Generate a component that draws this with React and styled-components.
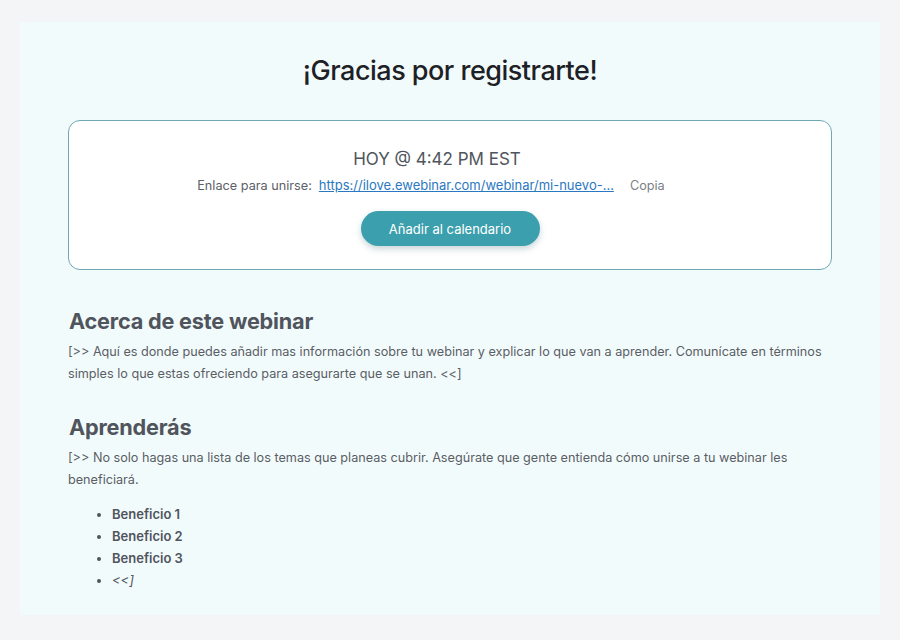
import React from 'react'
import styled, { createGlobalStyle } from 'styled-components';

const Global = createGlobalStyle`
    html, body {
        margin: 0;
        padding: 0;
        background: #f4f5f7;
        font-family: "Inter", "Noto Sans", sans-serif;
    }
`;

const Page = styled.div`
    padding: 22px 20px 25px 20px;
`;

const Panel = styled.div`
    background: #f2fbfb;
    min-height: 593px;
    box-sizing: border-box;
    padding: 32px 48px 20px 48px;
`;

const Title = styled.h1`
    margin: 0 0 33px 0;
    text-align: center;
    font-size: 27px;
    font-weight: 500;
    color: #1d2126;
    letter-spacing: -0.5px;
`;

const Card = styled.div`
    background: #ffffff;
    border: 1px solid #6ea8b4;
    border-radius: 12px;
    padding: 28px 20px 23px 20px;
    display: flex;
    flex-direction: column;
    align-items: center;
`;

const When = styled.div`
    padding-right: 26px;
    font-size: 17px;
    color: #50555d;
`;

const LinkRow = styled.div`
    margin-top: 8px;
    padding-right: 38px;
    display: flex;
    align-items: baseline;
    font-size: 12.7px;
    color: #5c6068;
`;

const JoinLink = styled.a`
    margin-left: 7px;
    color: #2a78c2;
    text-decoration: underline;
    white-space: nowrap;
    font-size: 13px;
`;

const Copy = styled.span`
    margin-left: 16px;
    color: #7b7f86;
`;

const CalendarButton = styled.button`
    margin-top: 18px;
    height: 35px;
    width: 179px;
    border: none;
    border-radius: 18px;
    background: #3c9fad;
    color: #ffffff;
    font-family: inherit;
    font-size: 13px;
    box-shadow: 0 3px 6px rgba(40, 90, 100, 0.25);
`;

const Section = styled.section`
    margin-top: ${props => props.top}px;
`;

const Heading = styled.h2`
    margin: 0 0 7px 1px;
    font-size: 21.7px;
    font-weight: 700;
    color: #50545d;
    letter-spacing: -0.2px;
`;

const Text = styled.p`
    margin: 0;
    font-size: 12.65px;
    line-height: 22px;
    color: #5a5e66;
`;

const List = styled.ul`
    margin: 12px 0 0 0;
    padding-left: 44px;
    font-size: 13px;
    line-height: 22px;
    color: #50545d;
`;

const Item = styled.li`
    font-weight: ${props => props.plain ? 400 : 600};
    font-style: ${props => props.plain ? 'italic' : 'normal'};
`;

export default function App() {
    return (
        <Page>
            <Global />
            <Panel>
                <Title>¡Gracias por registrarte!</Title>
                <Card>
                    <When>HOY @ 4:42 PM EST</When>
                    <LinkRow>
                        Enlace para unirse:
                        <JoinLink href="#">https://ilove.ewebinar.com/webinar/mi-nuevo-…</JoinLink>
                        <Copy>Copia</Copy>
                    </LinkRow>
                    <CalendarButton>Añadir al calendario</CalendarButton>
                </Card>
                <Section top={38}>
                    <Heading>Acerca de este webinar</Heading>
                    <Text>
                        [&gt;&gt; Aquí es donde puedes añadir mas información sobre tu webinar y explicar lo que van a aprender. Comunícate en términos simples lo que estas ofreciendo para asegurarte que se unan. &lt;&lt;]
                    </Text>
                </Section>
                <Section top={29}>
                    <Heading>Aprenderás</Heading>
                    <Text>
                        [&gt;&gt; No solo hagas una lista de los temas que planeas cubrir. Asegúrate que gente entienda cómo unirse a tu webinar les beneficiará.
                    </Text>
                    <List>
                        <Item>Beneficio 1</Item>
                        <Item>Beneficio 2</Item>
                        <Item>Beneficio 3</Item>
                        <Item plain>&lt;&lt;]</Item>
                    </List>
                </Section>
            </Panel>
        </Page>
    );
}
